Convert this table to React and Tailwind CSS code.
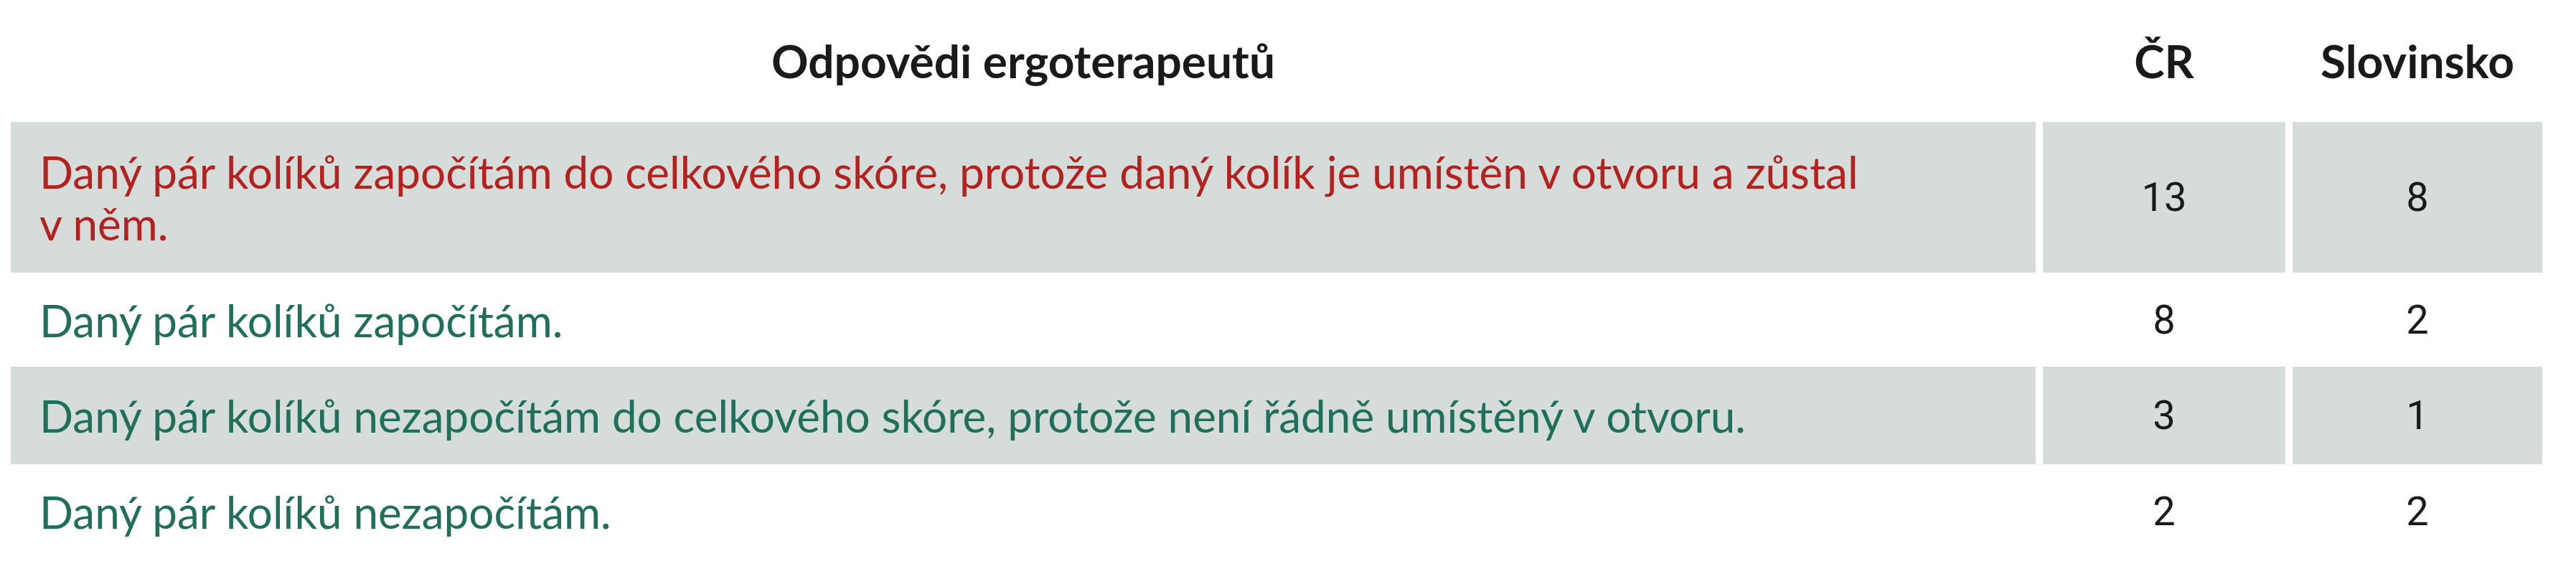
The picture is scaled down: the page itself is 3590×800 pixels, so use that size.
import React from 'react';

const rows = [
  {
    text: (
      <>
        Daný pár kolíků započítám do celkového skóre, protože daný kolík je umístěn v otvoru a zůstal
        <br />
        v něm.
      </>
    ),
    color: 'text-[#b3221e]',
    cz: 13,
    si: 8,
    shaded: true,
    h: 'h-[210px]',
  },
  { text: 'Daný pár kolíků započítám.', color: 'text-[#1f6f5a]', cz: 8, si: 2, shaded: false, h: 'h-[111px]' },
  {
    text: 'Daný pár kolíků nezapočítám do celkového skóre, protože není řádně umístěný v otvoru.',
    color: 'text-[#1f6f5a]',
    cz: 3,
    si: 1,
    shaded: true,
    h: 'h-[136px]',
  },
  { text: 'Daný pár kolíků nezapočítám.', color: 'text-[#1f6f5a]', cz: 2, si: 2, shaded: false, h: 'h-[111px]' },
];

export default function App() {
  return (
    <div className="w-[3590px] h-[800px] bg-white pl-[15px] pt-[10px] font-['Lato','Liberation_Sans',sans-serif]">
      <div className="grid grid-cols-[2822px_338px_348px] gap-[10px]">
        {/* header */}
        <div className="h-[150px] flex items-center justify-center text-[64px] font-bold text-[#1a1a1a]">
          Odpovědi ergoterapeutů
        </div>
        <div className="h-[150px] flex items-center justify-center text-[64px] font-bold text-[#1a1a1a]">ČR</div>
        <div className="h-[150px] flex items-center justify-center text-[64px] font-bold text-[#1a1a1a]">Slovinsko</div>

        {rows.map((r, i) => (
          <React.Fragment key={i}>
            <div
              className={`${r.h} flex items-center pl-[40px] text-[62px] leading-[72px] ${r.color} ${
                r.shaded ? 'bg-[#d5dcd9]' : 'bg-white'
              }`}
            >
              <div>{r.text}</div>
            </div>
            <div
              className={`${r.h} flex items-center justify-center font-['Roboto',sans-serif] text-[56px] text-[#1a1a1a] ${
                r.shaded ? 'bg-[#d5dcd9]' : 'bg-white'
              }`}
            >
              {r.cz}
            </div>
            <div
              className={`${r.h} flex items-center justify-center font-['Roboto',sans-serif] text-[56px] text-[#1a1a1a] ${
                r.shaded ? 'bg-[#d5dcd9]' : 'bg-white'
              }`}
            >
              {r.si}
            </div>
          </React.Fragment>
        ))}
      </div>
    </div>
  );
}
